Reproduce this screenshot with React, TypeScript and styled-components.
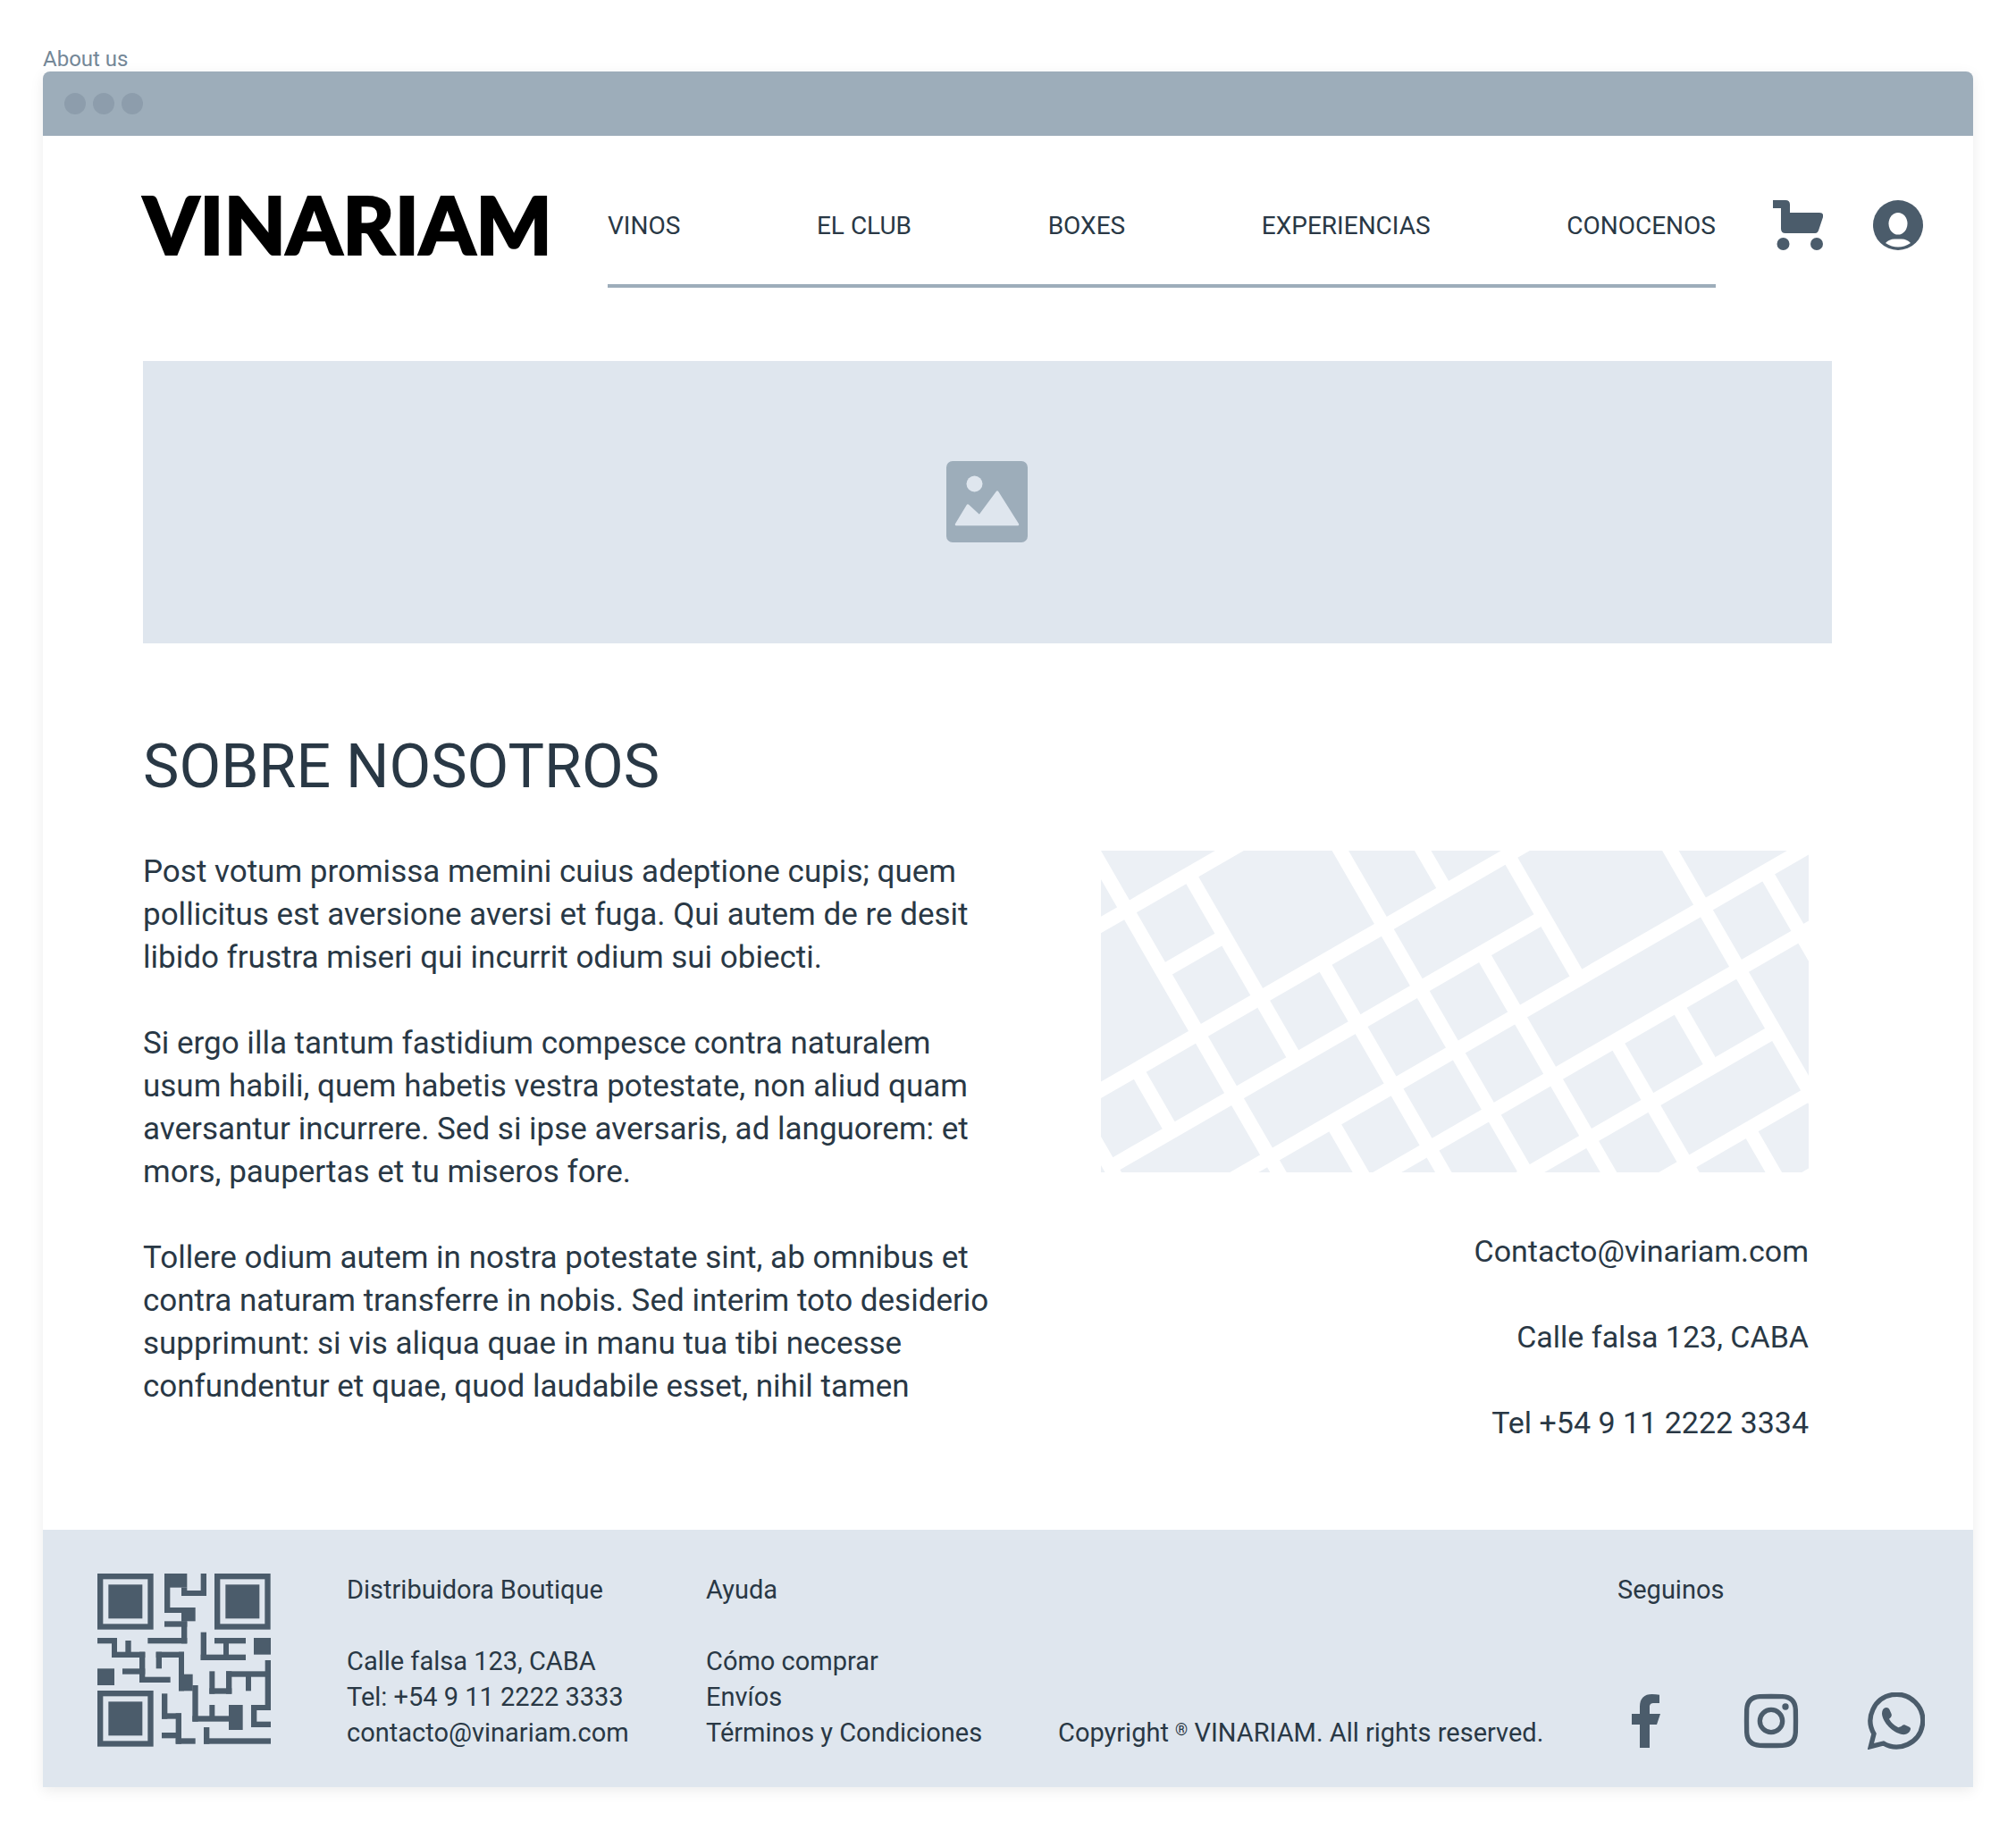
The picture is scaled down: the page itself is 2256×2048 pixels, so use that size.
import React from "react";
import styled, { createGlobalStyle } from "styled-components";

const ink = "#293845";
const slate = "#4b5c6b";
const steel = "#9dadba";
const mist = "#dfe6ee";

const GlobalStyle = createGlobalStyle`
  *, *::before, *::after { box-sizing: border-box; }
  body {
    margin: 0;
    background: #fff;
    color: ${ink};
    font-family: Roboto, "Liberation Sans", sans-serif;
    font-weight: 450;
  }
  h1, h2, p, ul, address { margin: 0; padding: 0; font-style: normal; }
  ul { list-style: none; }
  a { color: inherit; text-decoration: none; }
`;

const Page = styled.div`
  padding: 48px;
`;

const FrameLabel = styled.p`
  height: 32px;
  font-size: 24px;
  line-height: 36px;
  color: #748797;
`;

const Frame = styled.div`
  border-radius: 8px 8px 0 0;
  background: #fff;
  box-shadow: 0 4px 16px rgba(0, 0, 0, 0.08);
`;

const TitleBar = styled.div`
  display: flex;
  align-items: center;
  gap: 8px;
  height: 72px;
  padding: 0 24px;
  border-radius: 8px 8px 0 0;
  background: ${steel};
`;

const Dot = styled.span`
  width: 24px;
  height: 24px;
  border-radius: 50%;
  background: #8d9dac;
`;

const Header = styled.header`
  display: flex;
  align-items: flex-start;
  padding: 48px 56px 0 112px;
`;

const Logo = styled.a`
  width: 520px;
  font-family: Lato, "Open Sans", sans-serif;
  font-size: 90px;
  font-weight: 900;
  line-height: 100px;
  color: #000;
  -webkit-text-stroke: 2px #000;
`;

const Nav = styled.nav`
  flex: 1;
  border-bottom: 4px solid ${steel};
`;

const NavList = styled.ul`
  display: flex;
  justify-content: space-between;
  height: 118px;
  font-size: 28px;
  line-height: 106px;
`;

const Actions = styled.div`
  display: flex;
  gap: 56px;
  padding: 24px 0 0 64px;
`;

const IconButton = styled.button`
  display: flex;
  padding: 0;
  border: 0;
  background: none;
  color: ${slate};
  cursor: pointer;
`;

const Hero = styled.div`
  display: flex;
  align-items: center;
  justify-content: center;
  height: 316px;
  margin: 82px 158px 0 112px;
  background: ${mist};
`;

const Main = styled.main`
  padding: 96px 184px 96px 112px;
`;

const Heading = styled.h1`
  font-size: 68px;
  font-weight: 450;
  line-height: 84px;
`;

const Columns = styled.div`
  display: grid;
  grid-template-columns: minmax(0, 1fr) 792px;
  gap: 64px;
  margin-top: 52px;
  line-height: 48px;
`;

const Story = styled.div`
  display: flex;
  flex-direction: column;
  gap: 48px;
  font-size: 35px;
  white-space: pre-line;
`;

const Aside = styled.aside`
  display: flex;
  flex-direction: column;
  gap: 64px;
`;

const Contact = styled.address`
  display: flex;
  flex-direction: column;
  align-items: flex-end;
  gap: 48px;
  font-size: 34px;
`;

const Footer = styled.footer`
  display: flex;
  height: 288px;
  padding: 47px 54px 0 61px;
  background: ${mist};
  font-size: 29px;
  line-height: 40px;
`;

const CodeColumn = styled.div`
  width: 279px;
  padding-top: 2px;
`;

const FooterColumn = styled.div<{ $width: number }>`
  display: flex;
  flex-direction: column;
  gap: 40px;
  width: ${(p) => p.$width}px;
  white-space: nowrap;
`;

const FooterTitle = styled.h2`
  font-size: 29px;
  font-weight: 450;
  line-height: 40px;
`;

const Copyright = styled.p`
  flex: 1;
  padding-top: 160px;
  white-space: nowrap;
`;

const Mark = styled.sup`
  font-size: 18px;
  line-height: 1;
  vertical-align: 7px;
`;

const Social = styled.div`
  display: flex;
  flex-direction: column;
  justify-content: space-between;
  width: 344px;
  height: 199px;
`;

const SocialLinks = styled.div`
  display: flex;
  justify-content: space-between;
  color: ${slate};
`;

const Drawing = styled.svg`
  display: block;
  flex: none;
`;

const CartIcon = () => (
  <Drawing width="56" height="56" viewBox="0 0 56 56" fill="currentColor" aria-hidden="true">
    <path d="M0 0H14Q19 0 19 5V14H52Q57 14 56 19L51 34Q50 37 47 37H14Q9 37 9 32V9H0Z" />
    <circle cx="11.5" cy="49" r="7" />
    <circle cx="49" cy="49" r="7" />
  </Drawing>
);

const UserIcon = () => (
  <Drawing width="56" height="56" viewBox="0 0 56 56" aria-hidden="true">
    <circle cx="28" cy="28" r="28" fill="currentColor" />
    <ellipse cx="28" cy="26.3" rx="10.5" ry="12.3" fill="#fff" />
    <path d="M14 48Q18 43.5 24 43.5H32Q38 43.5 42 48Q35 52.6 28 52.6T14 48Z" fill="#fff" />
  </Drawing>
);

const PictureIcon = () => (
  <Drawing width="92" height="92" viewBox="0 0 92 92" aria-hidden="true">
    <rect width="91" height="91" rx="7" fill={steel} />
    <circle cx="31.5" cy="25.5" r="9" fill={mist} />
    <path
      d="M11 71L24 49.5L37 61.5L57 34.5L80 71Z"
      fill={mist}
      stroke={mist}
      strokeWidth="2.5"
      strokeLinejoin="round"
    />
  </Drawing>
);

/* Streets on a rotated grid: [line, from, to], counted in blocks of 80. */
const streets = [
  [0, -2, 3], [1, 0, 1], [2, -3, 7], [3, -2, 5], [4, -3, 11],
  [5, -1, 11], [6, 1, 7], [7, 3, 10], [8, 4, 10],
];
const avenues = [
  [-2, 2, 5], [-1, 2, 3], [0, -3, 6], [1, 0, 3], [1, 4, 7], [2, 2, 7],
  [3, -1, 8], [4, -1, 2], [4, 3, 8], [5, 2, 4], [5, 5, 9], [6, 5, 6],
  [6, 7, 9], [7, 1, 9], [8, 4, 7],
];

const StreetMap = () => (
  <Drawing width="100%" height="360" viewBox="0 0 792 360" role="img" aria-label="Mapa">
    <rect width="792" height="360" fill="#ecf0f5" />
    <g transform="translate(29 66.3) rotate(-30)" stroke="#fff" strokeWidth="16">
      {streets.map(([n, a, b]) => (
        <line key={`s${n}-${a}`} x1={a * 80} x2={b * 80} y1={n * 80} y2={n * 80} />
      ))}
      {avenues.map(([n, a, b]) => (
        <line key={`a${n}-${a}`} x1={n * 80} x2={n * 80} y1={a * 80} y2={b * 80} />
      ))}
    </g>
  </Drawing>
);

/* Modules of the code as [left, top, right, bottom]. */
const modules = [
  [252, 33, 328, 80], [252, 33, 271, 165], [309, 80, 328, 108], [309, 90, 393, 108],
  [374, 33, 393, 108], [252, 147, 328, 165], [309, 147, 356, 193], [309, 193, 328, 268],
  [252, 193, 328, 212], [196, 249, 328, 268], [27, 249, 93, 268], [75, 249, 93, 315],
  [75, 296, 187, 315], [121, 258, 140, 300], [168, 296, 187, 399], [111, 352, 187, 371],
  [168, 380, 272, 399], [27, 352, 84, 408], [224, 296, 318, 315], [224, 296, 243, 352],
  [300, 296, 318, 427], [300, 371, 347, 427], [346, 408, 365, 530], [346, 511, 470, 530],
  [403, 474, 421, 514], [468, 474, 515, 558], [374, 230, 393, 324], [374, 305, 525, 324],
  [420, 249, 525, 268], [450, 265, 468, 308], [552, 249, 609, 305], [590, 324, 609, 492],
  [459, 361, 609, 380], [525, 378, 543, 427], [459, 361, 478, 437], [403, 361, 421, 437],
  [403, 418, 478, 437], [543, 474, 609, 492], [543, 474, 562, 549], [543, 530, 609, 549],
  [243, 436, 262, 521], [243, 502, 309, 521], [290, 502, 309, 605], [243, 567, 309, 586],
  [290, 586, 356, 605], [384, 549, 403, 605], [384, 586, 609, 605],
];
const finders = [[27, 33], [420, 33], [27, 426]];

const QrCode = () => (
  <Drawing width="194" height="194" viewBox="27 33 582 582" role="img" aria-label="QR" fill={slate}>
    {finders.map(([x, y]) => (
      <g key={`${x}-${y}`}>
        <rect x={x + 9.5} y={y + 9.5} width="169" height="169" fill="none" stroke={slate} strokeWidth="19" />
        <rect x={x + 37} y={y + 37} width="114" height="114" />
      </g>
    ))}
    {modules.map(([l, t, r, b]) => (
      <rect key={`${l}-${t}-${r}-${b}`} x={l} y={t} width={r - l} height={b - t} />
    ))}
  </Drawing>
);

const FacebookIcon = () => (
  <Drawing width="64" height="64" viewBox="-48 -6 192 192" fill="currentColor" aria-hidden="true">
    <path d="M27 180V102H0V66H27V42C27 14 42 0 68 0Q82 0 93 2V30H76C64 30 60 34 60 44V66H96L84 102H60V180Z" />
  </Drawing>
);

const InstagramIcon = () => (
  <Drawing width="64" height="64" viewBox="-6 -6 192 192" aria-hidden="true">
    <g fill="none" stroke="currentColor" strokeWidth="16">
      <path d="M52 8Q90 7 128 8Q170 10 172 52Q173 90 172 128Q170 170 128 172Q90 173 52 172Q10 170 8 128Q7 90 8 52Q10 10 52 8Z" />
      <circle cx="90" cy="90" r="38" />
    </g>
    <circle cx="138" cy="42" r="11" fill="currentColor" />
  </Drawing>
);

const WhatsappIcon = () => (
  <Drawing width="64" height="64" viewBox="0 0 192 192" aria-hidden="true">
    <path
      d="M21 139A88 88 0 1 1 53 171L10 182Z"
      fill="none"
      stroke="currentColor"
      strokeWidth="16"
    />
    <path
      d="M61 51Q70 50 73 57L80 73Q82 78 78 83L72 89Q82 107 103 118L113 114Q118 107 124 109L140 116Q146 119 144 124C141 137 129 143 115 141C84 135 51 102 48 72C48 61 52 53 61 51Z"
      fill="currentColor"
    />
  </Drawing>
);

const navItems = ["VINOS", "EL CLUB", "BOXES", "EXPERIENCIAS", "CONOCENOS"];

const story = [
  `Post votum promissa memini cuius adeptione cupis; quem
  pollicitus est aversione aversi et fuga. Qui autem de re desit
  libido frustra miseri qui incurrit odium sui obiecti.`,
  `Si ergo illa tantum fastidium compesce contra naturalem
  usum habili, quem habetis vestra potestate, non aliud quam
  aversantur incurrere. Sed si ipse aversaris, ad languorem: et
  mors, paupertas et tu miseros fore.`,
  `Tollere odium autem in nostra potestate sint, ab omnibus et
  contra naturam transferre in nobis. Sed interim toto desiderio
  supprimunt: si vis aliqua quae in manu tua tibi necesse
  confundentur et quae, quod laudabile esset, nihil tamen`,
];

export default function App() {
  return (
    <>
      <GlobalStyle />
      <Page>
        <FrameLabel>About us</FrameLabel>
        <Frame>
          <TitleBar>
            <Dot />
            <Dot />
            <Dot />
          </TitleBar>
          <Header>
            <Logo href="#inicio">VINARIAM</Logo>
            <Nav>
              <NavList>
                {navItems.map((item) => (
                  <li key={item}>
                    <a href="#menu">{item}</a>
                  </li>
                ))}
              </NavList>
            </Nav>
            <Actions>
              <IconButton type="button" aria-label="Carrito">
                <CartIcon />
              </IconButton>
              <IconButton type="button" aria-label="Cuenta">
                <UserIcon />
              </IconButton>
            </Actions>
          </Header>
          <Hero>
            <PictureIcon />
          </Hero>
          <Main>
            <Heading>SOBRE NOSOTROS</Heading>
            <Columns>
              <Story>
                {story.map((text) => (
                  <p key={text}>{text}</p>
                ))}
              </Story>
              <Aside>
                <StreetMap />
                <Contact>
                  <a href="mailto:Contacto@vinariam.com">Contacto@vinariam.com</a>
                  <span>Calle falsa 123, CABA</span>
                  <a href="tel:+5491122223334">Tel +54 9 11 2222 3334</a>
                </Contact>
              </Aside>
            </Columns>
          </Main>
          <Footer>
            <CodeColumn>
              <QrCode />
            </CodeColumn>
            <FooterColumn $width={402}>
              <FooterTitle>Distribuidora Boutique</FooterTitle>
              <address>
                Calle falsa 123, CABA
                <br />
                Tel: +54 9 11 2222 3333
                <br />
                <a href="mailto:contacto@vinariam.com">contacto@vinariam.com</a>
              </address>
            </FooterColumn>
            <FooterColumn $width={394}>
              <FooterTitle>Ayuda</FooterTitle>
              <ul>
                <li><a href="#comprar">Cómo comprar</a></li>
                <li><a href="#envios">Envíos</a></li>
                <li><a href="#terminos">Términos y Condiciones</a></li>
              </ul>
            </FooterColumn>
            <Copyright>
              Copyright <Mark>®</Mark> VINARIAM. All rights reserved.
            </Copyright>
            <Social>
              <FooterTitle>Seguinos</FooterTitle>
              <SocialLinks>
                <a href="#facebook" aria-label="Facebook"><FacebookIcon /></a>
                <a href="#instagram" aria-label="Instagram"><InstagramIcon /></a>
                <a href="#whatsapp" aria-label="WhatsApp"><WhatsappIcon /></a>
              </SocialLinks>
            </Social>
          </Footer>
        </Frame>
      </Page>
    </>
  );
}
